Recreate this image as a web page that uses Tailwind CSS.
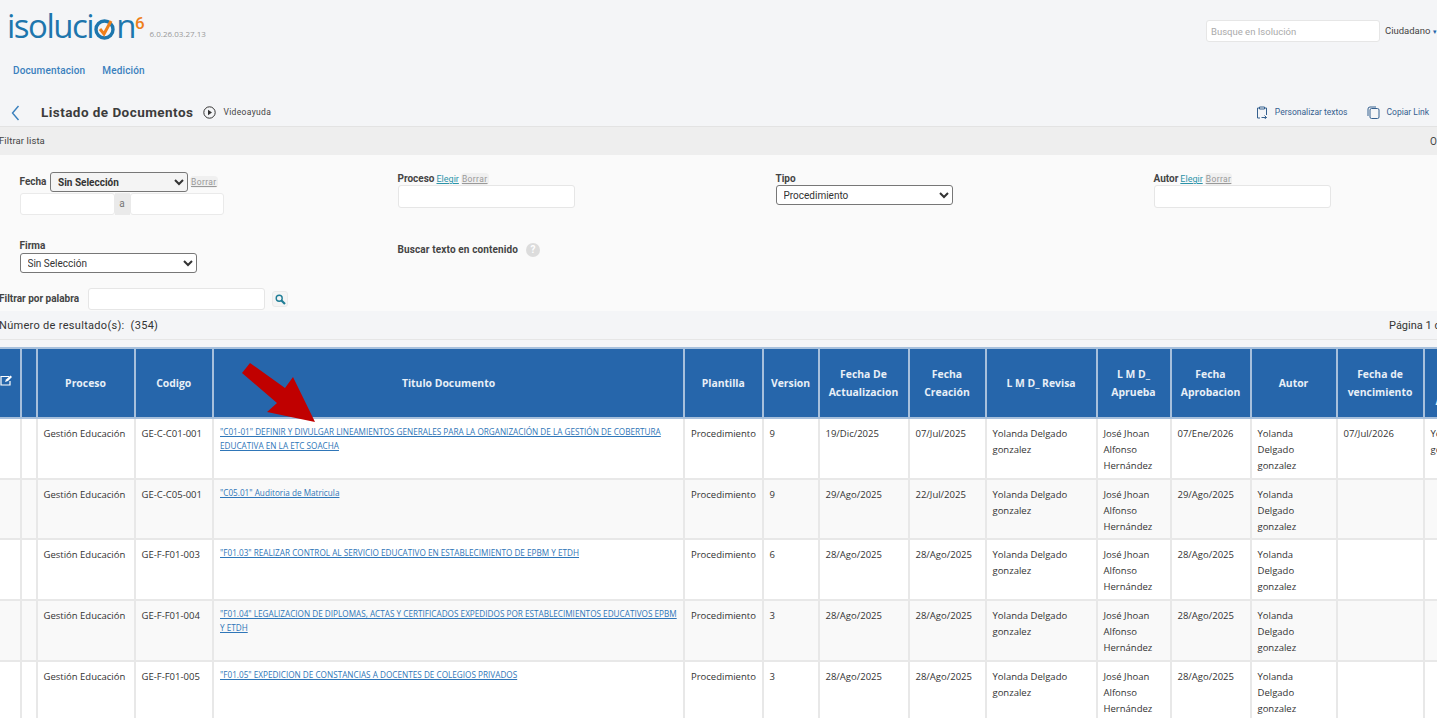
<!DOCTYPE html>
<html lang="es">
<head>
    <meta charset="UTF-8">
    <title>Listado de Documentos</title>
    <script src="https://cdn.jsdelivr.net/npm/@tailwindcss/browser@4"></script>
</head>
<body class="h-[718px] overflow-hidden bg-[#f4f5f7] font-['Roboto',sans-serif] text-[#333]">
    <div class="relative h-[718px] overflow-hidden">

        <!-- top bar -->
        <header class="h-[127px] border-b border-[#e3e3e3] bg-[#f4f5f7]">
            <div class="flex h-[56px] items-start justify-between pl-[7px] pt-[7px]">
                <div class="flex items-start">
                    <div class="-mt-[2px] flex items-start font-['Open_Sans',sans-serif] text-[33px] font-medium leading-[42px] tracking-[-1.5px] text-[#1d76ad]">
                        <span>isoluci</span>
                        <svg class="mx-[1px] mt-[14px] h-[21px] w-[21px]" viewBox="0 0 21 21" fill="none">
                            <circle cx="10.5" cy="10.5" r="8.5" stroke="#1d76ad" stroke-width="3.4"/>
                            <path d="M6 10l4 5 7-13" stroke="#ee7f1a" stroke-width="3"/>
                        </svg>
                        <span>n</span>
                    </div>
                    <span class="mt-[6px] text-[17px] font-medium leading-[20px] text-[#ee7f1a]">6</span>
                    <span class="ml-[5px] mt-[21px] font-['Open_Sans',sans-serif] text-[8px] leading-[12px] text-[#999]">6.0.26.03.27.13</span>
                </div>
                <div class="mt-[13px] flex items-center">
                    <input class="h-[22px] w-[174px] rounded-[3px] border border-[#e6e6e6] bg-white px-[4px] text-[9.5px] placeholder:text-[#aaa]" placeholder="Busque en Isolución">
                    <span class="ml-[5px] w-[52px] whitespace-nowrap text-[9.5px] text-[#444]">Ciudadano <span class="text-[7px] text-[#2666ab]">▾</span></span>
                </div>
            </div>
            <nav class="flex h-[43px] gap-[17px] pl-[13px] pt-[8px] text-[10px] font-medium leading-[14px] tracking-[0.15px] text-[#3a80bd]">
                <a>Documentacion</a>
                <a>Medición</a>
            </nav>
            <div class="flex h-[27px] items-center justify-between">
                <div class="flex items-center">
                    <svg class="ml-[11px] h-[16px] w-[9px]" viewBox="0 0 9 16" fill="none" stroke="#3a80bd" stroke-width="1.4"><path d="M7.5 1L1.5 8l6 7"/></svg>
                    <h1 class="ml-[21px] text-[13.5px] font-bold tracking-[0.45px] text-[#3c3c3c]">Listado de Documentos</h1>
                    <svg class="ml-[10px] h-[13px] w-[13px]" viewBox="0 0 13 13" fill="none"><circle cx="6.5" cy="6.5" r="5.7" stroke="#333"/><path d="M5 3.8l4 2.7-4 2.7z" fill="#333"/></svg>
                    <span class="ml-[7px] text-[8.5px] tracking-[0.35px] text-[#444]">Videoayuda</span>
                </div>
                <div class="flex items-center pr-[8px] text-[8.5px] text-[#35608f]">
                    <svg class="ml-[2px] h-[13px] w-[12px]" viewBox="0 0 12 13" fill="none" stroke="#35608f"><path d="M3 2H1.500v10H4M9 2h1.500v7M3.500 1h5v2h-5zM5.500 11.500h5M8.500 9.500l2 2-2 1.500"/></svg>
                    <span class="ml-[7px]">Personalizar textos</span>
                    <svg class="ml-[19px] h-[13px] w-[13px]" viewBox="0 0 13 13" fill="none" stroke="#35608f"><rect x="3" y="2.5" width="9" height="10" rx="1.5"/><path d="M1 10V3a2 2 0 0 1 2-2h6"/></svg>
                    <span class="ml-[7px]">Copiar Link</span>
                </div>
            </div>
        </header>

        <!-- filter title -->
        <div class="flex h-[28px] items-center justify-between bg-[#eeeeee] text-[9.5px] text-[#444]">
            <span class="-ml-[1px] tracking-[0.1px]">Filtrar lista</span>
            <span class="text-[10px]">O</span>
        </div>

        <!-- filters -->
        <section class="h-[156px] bg-[#fafafa] text-[10px] font-bold leading-[12px] text-[#444]">
            <div class="grid h-[85px] grid-cols-[378px_378px_378px_1fr] pl-[19.5px] pt-[17px]">
                <div>
                    <div class="flex items-center">
                        <span class="w-[30.5px]">Fecha</span>
                        <select class="h-[20px] w-[138px] rounded-[3px] border border-[#777] bg-[#f4f4f4] pl-[3px] text-[10px] font-bold text-[#333]">
                            <option>Sin Selección</option>
                        </select>
                        <span class="ml-[2px] rounded-[4px] bg-[#f0f0f0] px-[1px] text-[8.5px] font-normal tracking-[0.4px] text-[#999] underline">Borrar</span>
                    </div>
                    <div class="mt-[1px] flex h-[22px] w-[204px]">
                        <input class="w-[95px] rounded-[3px] border border-[#eaeaea] bg-white">
                        <span class="flex w-[15px] items-center justify-center bg-[#eaeaea] text-[10px] font-normal text-[#777]">a</span>
                        <input class="w-[94px] rounded-[3px] border border-[#eaeaea] bg-white">
                    </div>
                </div>
                <div>
                    <div class="flex h-[13px] items-end">
                        <span>Proceso</span>
                        <span class="ml-[2px] text-[9px] font-normal text-[#2c93a8] underline">Elegir</span>
                        <span class="ml-[2px] rounded-[4px] bg-[#f0f0f0] px-[1px] text-[8.5px] font-normal tracking-[0.4px] text-[#999] underline">Borrar</span>
                    </div>
                    <input class="block h-[23px] w-[177px] rounded-[3px] border border-[#e6e6e6] bg-white">
                </div>
                <div>
                    <div class="flex h-[13px] items-end">Tipo</div>
                    <select class="block h-[20px] w-[177px] rounded-[3px] border border-[#777] bg-white pl-[3px] text-[10px] font-normal text-[#333]">
                        <option>Procedimiento</option>
                    </select>
                </div>
                <div>
                    <div class="flex h-[13px] items-end">
                        <span>Autor</span>
                        <span class="ml-[2px] text-[9px] font-normal text-[#2c93a8] underline">Elegir</span>
                        <span class="ml-[2px] rounded-[4px] bg-[#f0f0f0] px-[1px] text-[8.5px] font-normal tracking-[0.4px] text-[#999] underline">Borrar</span>
                    </div>
                    <input class="block h-[23px] w-[177px] rounded-[3px] border border-[#e6e6e6] bg-white">
                </div>
            </div>
            <div class="grid h-[47px] grid-cols-[378px_1fr] pl-[19.5px]">
                <div>
                    <div class="h-[12px]">Firma</div>
                    <select class="mt-[1px] block h-[20px] w-[177px] rounded-[3px] border border-[#777] bg-white pl-[3px] text-[10px] font-normal text-[#333]">
                        <option>Sin Selección</option>
                    </select>
                </div>
                <div class="flex h-[20px] items-center">
                    <span class="tracking-[0.13px]">Buscar texto en contenido</span>
                    <span class="ml-[8px] flex h-[14px] w-[14px] items-center justify-center rounded-full bg-[#dcdcdc] text-[10px] text-white">?</span>
                </div>
            </div>
            <div class="flex h-[24px] items-center">
                <span class="-ml-[1px] w-[89px]">Filtrar por palabra</span>
                <input class="h-[22px] w-[177px] rounded-[3px] border border-[#e6e6e6] bg-white">
                <span class="ml-[7px] flex h-[16px] w-[16px] items-center justify-center rounded-[3px] border border-[#eaeaea] bg-[#f4f4f4]">
                    <svg class="h-[11px] w-[11px]" viewBox="0 0 11 11" fill="none" stroke="#1f7d96"><circle cx="4.2" cy="4.2" r="3" stroke-width="1.4"/><path d="M6.5 6.5L10 10" stroke-width="2.2"/></svg>
                </span>
            </div>
        </section>

        <!-- result count -->
        <div class="flex h-[29px] items-center justify-between border-b border-[#e6e6e6] pt-[3px] text-[11px] text-[#333]">
            <span class="-ml-[1px] tracking-[0.3px]">Número de resultado(s):&nbsp; (354)</span>
            <span class="w-[48px] overflow-hidden whitespace-nowrap">Página 1 de 36</span>
        </div>

        <!-- results table -->
        <div class="-ml-[2px] mt-[7px] w-[1482px]">
            <table class="w-[1482px] table-fixed border-collapse font-['Open_Sans',sans-serif]">
                <colgroup>
                    <col class="w-[21.5px]"><col class="w-[16px]"><col class="w-[98px]"><col class="w-[78.5px]"><col class="w-[471px]"><col class="w-[78.5px]"><col class="w-[56px]"><col class="w-[90px]"><col class="w-[77px]"><col class="w-[111px]"><col class="w-[74px]"><col class="w-[80px]"><col class="w-[86px]"><col class="w-[87px]"><col class="w-[57px]">
                </colgroup>
                <thead>
                    <tr class="h-[70px] bg-[#2666ab] text-center text-[10.4px] font-bold leading-[18px] text-[#e8eff7]">
                        <th class="border-2 border-[#a7c0dc] text-left font-bold">
                            <svg class="mb-[6px] inline h-[11px] w-[13px]" viewBox="0 0 13 11" fill="none" stroke="#fff"><path d="M9 1.500H1v8.500h9V6" stroke-width="1.200"/><path d="M5 7l1-2.500L10.500.5l1.500 1.500L8 6z" fill="#fff" stroke="none"/></svg>
                        </th>
                        <th class="border-2 border-[#a7c0dc]"></th>
                        <th class="border-2 border-[#a7c0dc]">Proceso</th>
                        <th class="border-2 border-[#a7c0dc]">Codigo</th>
                        <th class="border-2 border-[#a7c0dc]">Titulo Documento</th>
                        <th class="border-2 border-[#a7c0dc]">Plantilla</th>
                        <th class="border-2 border-[#a7c0dc]">Version</th>
                        <th class="border-2 border-[#a7c0dc]">Fecha De<br>Actualizacion</th>
                        <th class="border-2 border-[#a7c0dc]">Fecha<br>Creación</th>
                        <th class="border-2 border-[#a7c0dc]">L M D_ Revisa</th>
                        <th class="border-2 border-[#a7c0dc]">L M D_<br>Aprueba</th>
                        <th class="border-2 border-[#a7c0dc]">Fecha<br>Aprobacion</th>
                        <th class="border-2 border-[#a7c0dc]">Autor</th>
                        <th class="border-2 border-[#a7c0dc]">Fecha de<br>vencimiento</th>
                        <th class="border-2 border-[#a7c0dc]">Fecha<br>de<br>Ajuste</th>
                    </tr>
                </thead>
                <tbody id="rows"></tbody>
            </table>
        </div>

        <!-- red arrow drawn over the screenshot -->
        <svg class="absolute left-[241px] top-[362px] h-[60px] w-[76px]" viewBox="0 0 76 60">
            <path d="M9 1L44 26l8-11 22 45-48-10 10-9L1 11z" fill="#c00000"/>
        </svg>
    </div>

    <script>
        const docs = [
            { code: 'GE-C-C01-001', title: '"C01-01" DEFINIR Y DIVULGAR LINEAMIENTOS GENERALES PARA LA ORGANIZACIÓN DE LA GESTIÓN DE COBERTURA EDUCATIVA EN LA ETC SOACHA', ver: 9, act: '19/Dic/2025', cre: '07/Jul/2025', apr: '07/Ene/2026', ven: '07/Jul/2026', last: 'Yolanda gonzalez' },
            { code: 'GE-C-C05-001', title: '"C05.01" Auditoria de Matricula', ver: 9, act: '29/Ago/2025', cre: '22/Jul/2025', apr: '29/Ago/2025', ven: '', last: '' },
            { code: 'GE-F-F01-003', title: '"F01.03" REALIZAR CONTROL AL SERVICIO EDUCATIVO EN ESTABLECIMIENTO DE EPBM Y ETDH', ver: 6, act: '28/Ago/2025', cre: '28/Ago/2025', apr: '28/Ago/2025', ven: '', last: '' },
            { code: 'GE-F-F01-004', title: '"F01.04" LEGALIZACION DE DIPLOMAS, ACTAS Y CERTIFICADOS EXPEDIDOS POR ESTABLECIMIENTOS EDUCATIVOS EPBM Y ETDH', ver: 3, act: '28/Ago/2025', cre: '28/Ago/2025', apr: '28/Ago/2025', ven: '', last: '' },
            { code: 'GE-F-F01-005', title: '"F01.05" EXPEDICION DE CONSTANCIAS A DOCENTES DE COLEGIOS PRIVADOS', ver: 3, act: '28/Ago/2025', cre: '28/Ago/2025', apr: '28/Ago/2025', ven: '', last: '' }
        ];

        const td = 'border-x-2 border-b-2 border-[#e8e8e8] px-[6px] pt-[7px] pb-[2px] align-top';

        document.getElementById('rows').innerHTML = docs.map((d, i) => `
            <tr class="${i % 2 ? 'bg-[#f9f9f9]' : 'bg-white'} h-[60.700px] text-[9.5px] leading-[16px] text-[#333]">
                <td class="${td}"></td>
                <td class="${td}"></td>
                <td class="${td}">Gestión Educación</td>
                <td class="${td}">${d.code}</td>
                <td class="border-x-2 border-b-2 border-[#e8e8e8] px-[6px] pt-[6px] pb-[2px] align-top leading-[14px]"><a class="text-[8.2px] text-[#2f76b8] underline">${d.title}</a></td>
                <td class="${td}">Procedimiento</td>
                <td class="${td}">${d.ver}</td>
                <td class="${td}">${d.act}</td>
                <td class="${td}">${d.cre}</td>
                <td class="${td}">Yolanda Delgado gonzalez</td>
                <td class="${td}">José Jhoan Alfonso Hernández</td>
                <td class="${td}">${d.apr}</td>
                <td class="${td}">Yolanda Delgado gonzalez</td>
                <td class="${td}">${d.ven}</td>
                <td class="${td}">${d.last}</td>
            </tr>
        `).join('');
    </script>
</body>
</html>
